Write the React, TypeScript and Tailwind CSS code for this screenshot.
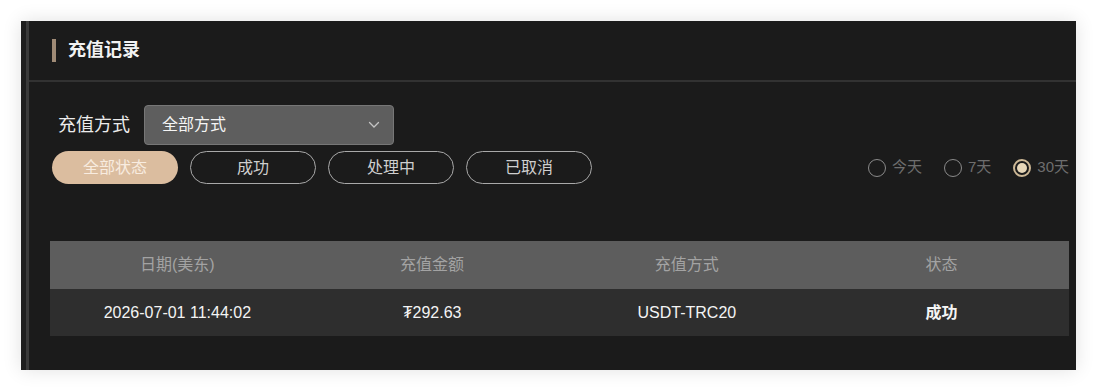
import React from "react";

const font = { fontFamily: '"Liberation Sans", "Noto Sans CJK SC", "DejaVu Sans", sans-serif' };

const statuses = ["全部状态", "成功", "处理中", "已取消"];
const ranges = ["今天", "7天", "30天"];

const Radio = ({ label, checked }: { label: string; checked?: boolean }) => (
  <div className="flex items-center gap-[6px]">
    <div
      className={
        checked
          ? "w-[18px] h-[18px] rounded-full border-2 border-[#cdb896] flex items-center justify-center"
          : "w-[18px] h-[18px] rounded-full border-[1.5px] border-[#8a8a8a]"
      }
    >
      {checked && <div className="w-[10px] h-[10px] rounded-full bg-[#e6d6b8]" />}
    </div>
    <span className="text-[15px] text-[#6e6e6e]">{label}</span>
  </div>
);

export default function App() {
  return (
    <div className="w-[1097px] h-[391px] bg-white pt-[21px] pl-[21px]" style={font}>
      <div className="w-[1055px] h-[349px] bg-[#1b1b1b] flex shadow-[0_0_18px_rgba(0,0,0,0.12)]">
        <div className="w-[5px] bg-[#1e1e1e]" />
        <div className="w-[3px] bg-[#3a3a3a]" />
        <div className="flex-1 flex flex-col">
          {/* header */}
          <div className="h-[61px] border-b-2 border-[#323232] flex items-center pl-[23px] gap-[12px]">
            <div className="w-[4px] h-[23px] bg-[#a08b76]" />
            <span className="text-[18px] font-bold text-[#f2f2f2]">充值记录</span>
          </div>

          {/* method filter */}
          <div className="flex items-center pl-[29px] mt-[23px] gap-[14px]">
            <span className="text-[18px] text-[#ececec]">充值方式</span>
            <div className="w-[250px] h-[40px] rounded-[4px] bg-[#5e5e5e] border border-[#777] flex items-center justify-between pl-[17px] pr-[13px]">
              <span className="text-[16px] text-[#f5f5f5]">全部方式</span>
              <svg width="12" height="8" viewBox="0 0 12 8" fill="none">
                <path d="M1.5 1.5 6 6l4.5-4.5" stroke="#c4c4c4" strokeWidth="1.3" strokeLinecap="round" />
              </svg>
            </div>
          </div>

          {/* status + range */}
          <div className="flex items-center justify-between pl-[23px] pr-[7px] mt-[6px]">
            <div className="flex gap-[12px]">
              {statuses.map((s, i) => (
                <div
                  key={s}
                  className={
                    i === 0
                      ? "w-[126px] h-[33px] rounded-full bg-[#dbbd9f] text-[#f8ece0] text-[16px] flex items-center justify-center"
                      : "w-[126px] h-[33px] rounded-full border border-[#a9a9a9] text-[#cfcfcf] text-[16px] flex items-center justify-center"
                  }
                >
                  {s}
                </div>
              ))}
            </div>
            <div className="flex items-center gap-[22px]">
              {ranges.map((r, i) => (
                <Radio key={r} label={r} checked={i === 2} />
              ))}
            </div>
          </div>

          {/* table */}
          <div className="ml-[21px] mr-[7px] mt-[57px]">
            <div className="grid grid-cols-4 h-[48px] bg-[#5d5d5d] items-center text-center text-[16px] text-[#a3a3a3]">
              <span>日期(美东)</span>
              <span>充值金额</span>
              <span>充值方式</span>
              <span>状态</span>
            </div>
            <div className="grid grid-cols-4 h-[47px] bg-[#2e2e2e] items-center text-center text-[16px] text-[#f4f4f4]">
              <span>2026-07-01 11:44:02</span>
              <span>₮292.63</span>
              <span>USDT-TRC20</span>
              <span className="font-bold">成功</span>
            </div>
          </div>
        </div>
      </div>
    </div>
  );
}
